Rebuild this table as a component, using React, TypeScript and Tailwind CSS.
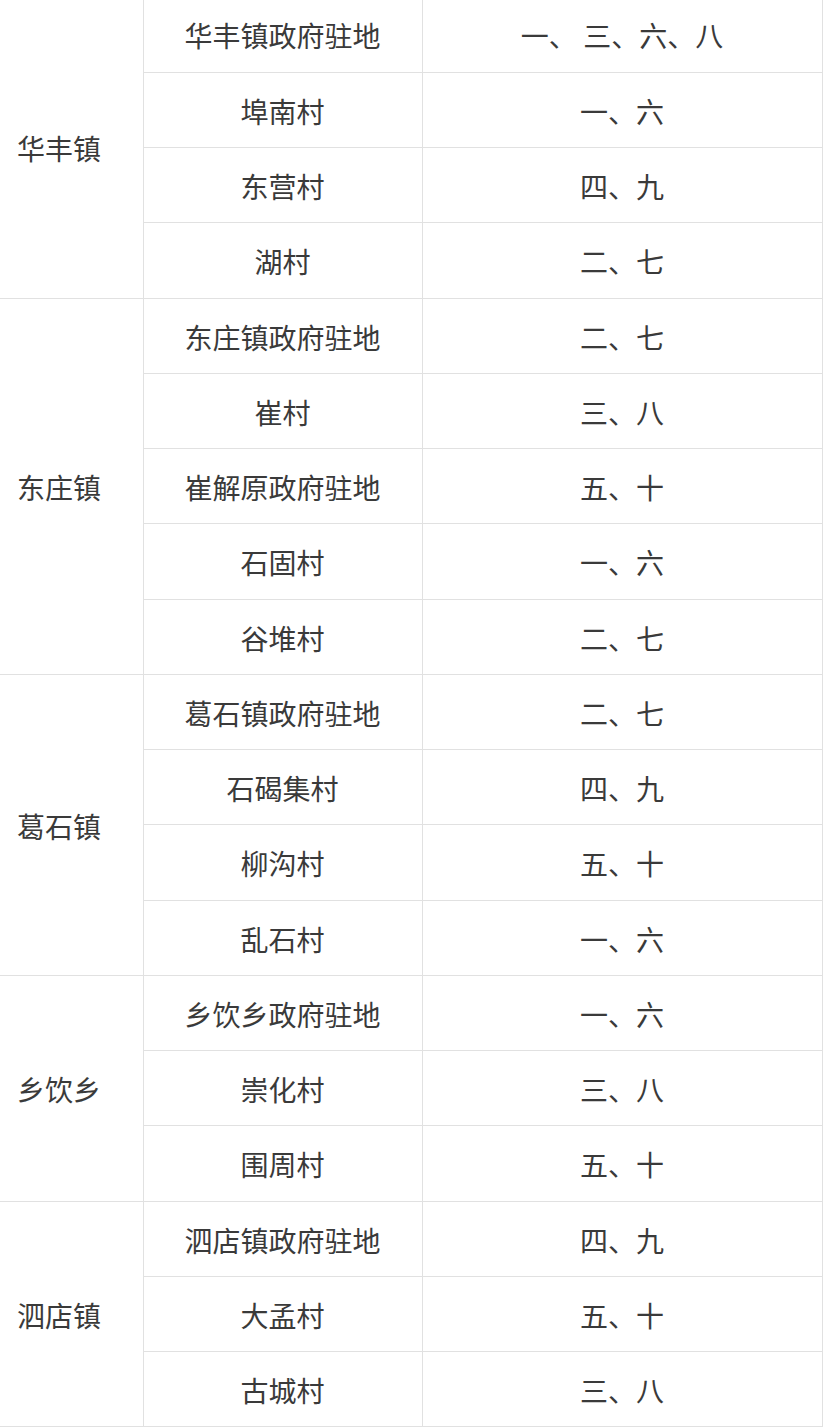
type Group = { town: string; rows: [string, string][] };

const groups: Group[] = [
  {
    town: "华丰镇",
    rows: [
      ["华丰镇政府驻地", "一、 三、六、八"],
      ["埠南村", "一、六"],
      ["东营村", "四、九"],
      ["湖村", "二、七"],
    ],
  },
  {
    town: "东庄镇",
    rows: [
      ["东庄镇政府驻地", "二、七"],
      ["崔村", "三、八"],
      ["崔解原政府驻地", "五、十"],
      ["石固村", "一、六"],
      ["谷堆村", "二、七"],
    ],
  },
  {
    town: "葛石镇",
    rows: [
      ["葛石镇政府驻地", "二、七"],
      ["石碣集村", "四、九"],
      ["柳沟村", "五、十"],
      ["乱石村", "一、六"],
    ],
  },
  {
    town: "乡饮乡",
    rows: [
      ["乡饮乡政府驻地", "一、六"],
      ["崇化村", "三、八"],
      ["围周村", "五、十"],
    ],
  },
  {
    town: "泗店镇",
    rows: [
      ["泗店镇政府驻地", "四、九"],
      ["大孟村", "五、十"],
      ["古城村", "三、八"],
    ],
  },
];

export default function App() {
  return (
    <div className="w-[829px] h-[1427px] overflow-hidden bg-white">
      <table
        className="mt-[-3px] w-[822px] border-collapse text-[28px] text-[#3a3a3a] table-fixed"
        style={{ fontFamily: '"Noto Sans CJK SC", "Noto Sans", sans-serif' }}
      >
        <colgroup>
          <col className="w-[143px]" />
          <col className="w-[279px]" />
          <col className="w-[400px]" />
        </colgroup>
        <tbody>
          {groups.map((g) =>
            g.rows.map(([place, days], i) => (
              <tr key={g.town + place} className="h-[75.25px]">
                {i === 0 && (
                  <td
                    rowSpan={g.rows.length}
                    className="border-b border-r border-[#e1e1e1] pl-[17px] pt-[2px] text-left align-middle"
                  >
                    {g.town}
                  </td>
                )}
                <td className="border-b border-r border-[#e1e1e1] pt-[2px] text-center align-middle">
                  {place}
                </td>
                <td className="border-b border-r border-[#e1e1e1] pt-[2px] text-center align-middle whitespace-pre">
                  {days}
                </td>
              </tr>
            )),
          )}
        </tbody>
      </table>
    </div>
  );
}
